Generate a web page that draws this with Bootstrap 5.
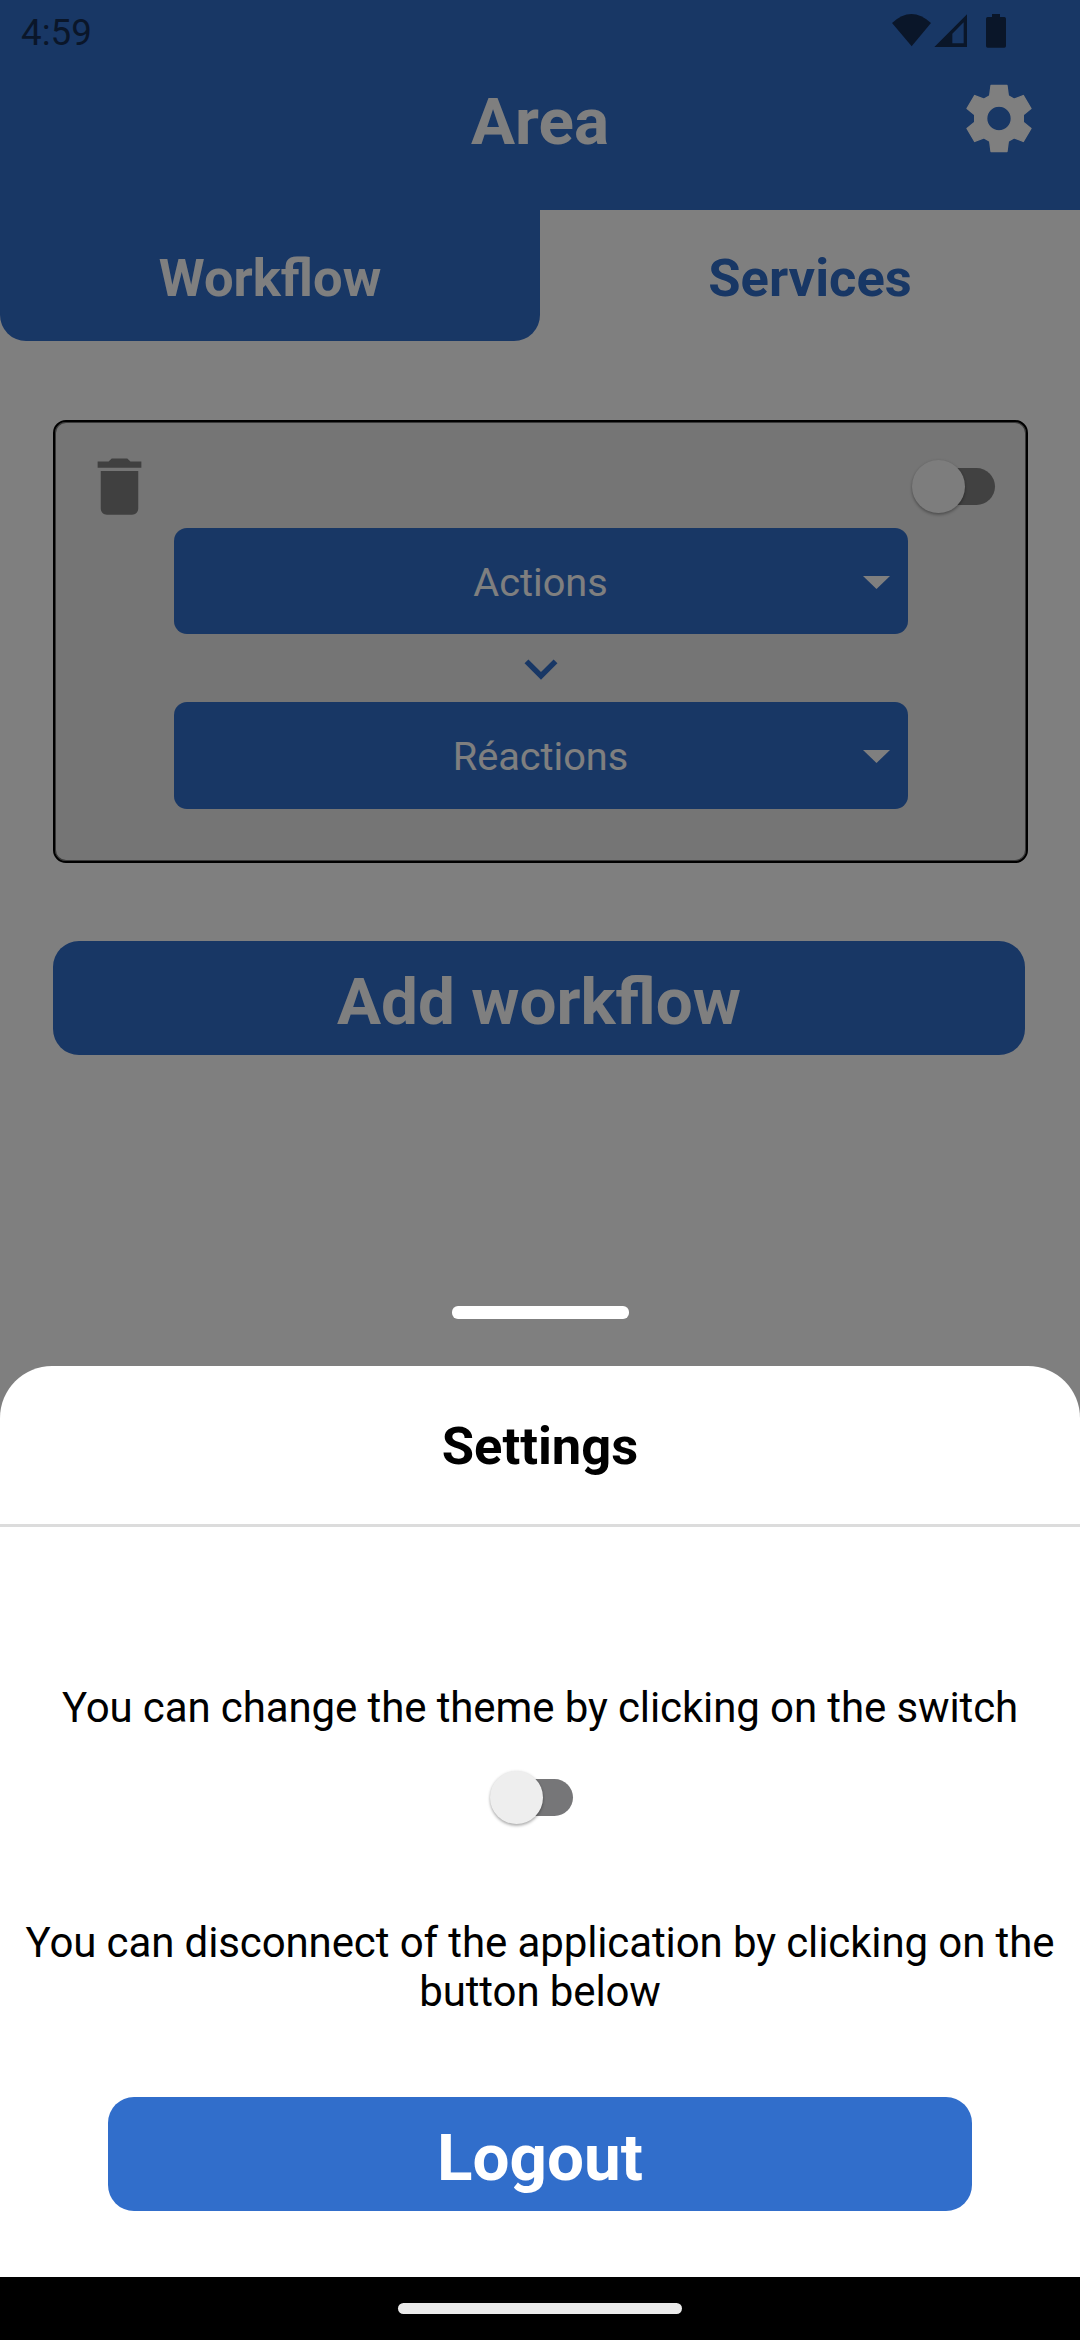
<!DOCTYPE html>
<html lang="en">
<head>
<meta charset="utf-8">
<meta name="viewport" content="width=device-width, initial-scale=1">
<title>Area</title>
<link href="https://cdn.jsdelivr.net/npm/bootstrap@5.3.0/dist/css/bootstrap.min.css" rel="stylesheet">
<style>
  :root { --area-blue: #316ecb; }
  body { font-family: Roboto, sans-serif; background: #fff; color: #000; }
  svg { display: block; flex: none; }
  .phone { width: 1080px; height: 2340px; }
  .fill-blue { background: var(--area-blue); }

  .status-line { height: 63px; padding: 2px 66px 0 21px; font-size: 36.75px; color: #142c52; }
  .status-line svg { margin-bottom: 3px; }
  .app-head { height: 147px; }
  .app-title { font-size: 65.6px; line-height: 118px; }
  .gear-btn { right: 47px; top: 21px; }

  .tab-link { height: 131px; padding: 5px 0 0; font-size: 52.5px; line-height: 1; color: var(--area-blue); }
  .tab-link.active { background: var(--area-blue); color: #fff; border-radius: 0 0 26px 26px; }

  .content-area { padding: 79px 52px 0 53px; }
  .flow-card { height: 443px; background: #eaeaea; border: 2px solid #000; border-radius: 13px; box-shadow: inset 0 0 0 1px #707070; padding: 27px 30px 0 26.5px; }
  .flow-top { height: 79px; }
  .flow-top .toggle { margin-top: 11px; }
  .flow-select { width: 734px; height: 106px; border-radius: 13px; font-size: 39.7px; line-height: 1; padding-top: 3px; }
  .flow-select .caret { right: 18px; top: 48px; }
  .flow-select.reaction { height: 107px; }
  .flow-body { margin-left: -1.5px; margin-right: -5px; }

  .toggle { width: 84px; height: 54px; }
  .toggle .track { left: 6px; right: 1px; top: 8px; height: 37px; border-radius: 19px; background: #767678; }
  .toggle .thumb { left: 0; top: 0; width: 53px; height: 53px; background: #eee; box-shadow: 0 2px 3px rgba(0,0,0,.28), 0 0 3px rgba(0,0,0,.1); }
  .flow-top .track { background: #828282; }
  .flow-top .thumb { background: #fafafa; }

  .big-btn { height: 114px; border-radius: 26px; font-size: 65.6px; line-height: 1; padding-top: 7px; }
  .add-btn { margin-top: 78px; margin-right: 3px; }

  .dimmer { background: rgba(0,0,0,.5); }
  .grabber { width: 177px; height: 13px; border-radius: 6px; margin-bottom: 47px; }
  .sheet { height: 911px; border-radius: 52px 52px 0 0; }
  .sheet-title { height: 161px; border-bottom: 3px solid #dcdcdc; font-size: 52.5px; line-height: 1; padding-top: 2px; }
  .sheet-text { font-size: 42px; line-height: 49px; letter-spacing: -.11px; }
  .theme-text { margin-top: 156px; }
  .theme-switch { margin: 39px 0 0 490px; }
  .logout-text { margin-top: 93px; }
  .logout-btn { margin: 81px 108px 0; }
  .system-nav { height: 63px; }
  .home-pill { width: 284px; height: 11px; background: #ebebeb; }
</style>
</head>
<body>
<div class="phone position-relative overflow-hidden bg-white">

  <header class="fill-blue">
    <div class="status-line d-flex align-items-center justify-content-between">
      <span>4:59</span>
      <svg width="122" height="34" viewBox="0 0 366 102" fill="#142c52">
        <path d="M0 27Q58-27 117 27L59 97Z"/>
        <path fill-rule="evenodd" d="M127 99 225 1V99ZM181 59V88H215V25Z"/>
        <path d="M300 0H324V9H337Q342 9 342 14V96Q342 101 337 101H287Q282 101 282 96V14Q282 9 287 9H300Z"/>
      </svg>
    </div>
    <div class="app-head position-relative text-center text-white">
      <div class="app-title fw-bold">Area</div>
      <a class="gear-btn position-absolute" href="#" aria-label="Settings">
        <svg width="68" height="69" viewBox="-102 -103.5 204 207">
          <path fill="#fff" stroke="#fff" stroke-width="4" stroke-linejoin="round" fill-rule="evenodd" d="M-24-99H24L28-68 45-58 73-69 96-30 73-11V11L96 30 73 69 45 58 28 68 24 99H-24L-28 68-45 58-73 69-96 30-73 11V-11L-96-30-73-69-45-58-28-68ZM0-37A37 37 0 1 0 0 37 37 37 0 1 0 0-37Z"/>
        </svg>
      </a>
    </div>
  </header>

  <nav class="row g-0 fw-bold text-center">
    <div class="col-6 tab-link active d-flex align-items-center justify-content-center">Workflow</div>
    <div class="col-6 tab-link d-flex align-items-center justify-content-center">Services</div>
  </nav>

  <main class="content-area">
    <section class="flow-card">
      <div class="flow-top d-flex justify-content-between">
        <svg width="75" height="75" viewBox="0 0 24 24" fill="#808080"><path d="M6 19c0 1.1.9 2 2 2h8c1.1 0 2-.9 2-2V7H6v12zM19 4h-3.5l-1-1h-5l-1 1H5v2h14V4z"/></svg>
        <div class="toggle position-relative">
          <div class="track position-absolute"></div>
          <div class="thumb position-absolute rounded-circle"></div>
        </div>
      </div>
      <div class="flow-body d-flex flex-column align-items-center">
        <div class="flow-select fill-blue text-white position-relative d-flex align-items-center justify-content-center">Actions
          <svg class="caret position-absolute" width="27" height="13" viewBox="0 0 27 13"><path fill="#fff" d="M0 0H27L13.500 13Z"/></svg>
        </div>
        <svg width="66" height="68" viewBox="0 0 24 24.800"><path fill="#316ecb" d="M16.590 9.300 12 13.880 7.410 9.300 6 10.710l6 6 6-6z"/></svg>
        <div class="flow-select reaction fill-blue text-white position-relative d-flex align-items-center justify-content-center">Réactions
          <svg class="caret position-absolute" width="27" height="13" viewBox="0 0 27 13"><path fill="#fff" d="M0 0H27L13.500 13Z"/></svg>
        </div>
      </div>
    </section>
    <div class="big-btn add-btn fill-blue text-white fw-bold d-flex align-items-center justify-content-center">Add workflow</div>
  </main>

  <div class="dimmer position-absolute top-0 start-0 w-100 h-100 d-flex flex-column justify-content-end">
    <div class="grabber bg-white mx-auto"></div>
    <section class="sheet bg-white">
      <div class="sheet-title fw-bold d-flex align-items-center justify-content-center">Settings</div>
      <div class="sheet-text theme-text text-center">You can change the theme by clicking on the switch</div>
      <div class="toggle theme-switch position-relative">
        <div class="track position-absolute"></div>
        <div class="thumb position-absolute rounded-circle"></div>
      </div>
      <div class="sheet-text logout-text text-center">You can disconnect of the application by clicking on the<br>button below</div>
      <div class="big-btn logout-btn fill-blue text-white fw-bold d-flex align-items-center justify-content-center">Logout</div>
    </section>
    <div class="system-nav bg-black d-flex align-items-center justify-content-center">
      <div class="home-pill rounded-pill"></div>
    </div>
  </div>
</div>
<script src="https://cdn.jsdelivr.net/npm/bootstrap@5.3.0/dist/js/bootstrap.bundle.min.js"></script>
</body>
</html>
